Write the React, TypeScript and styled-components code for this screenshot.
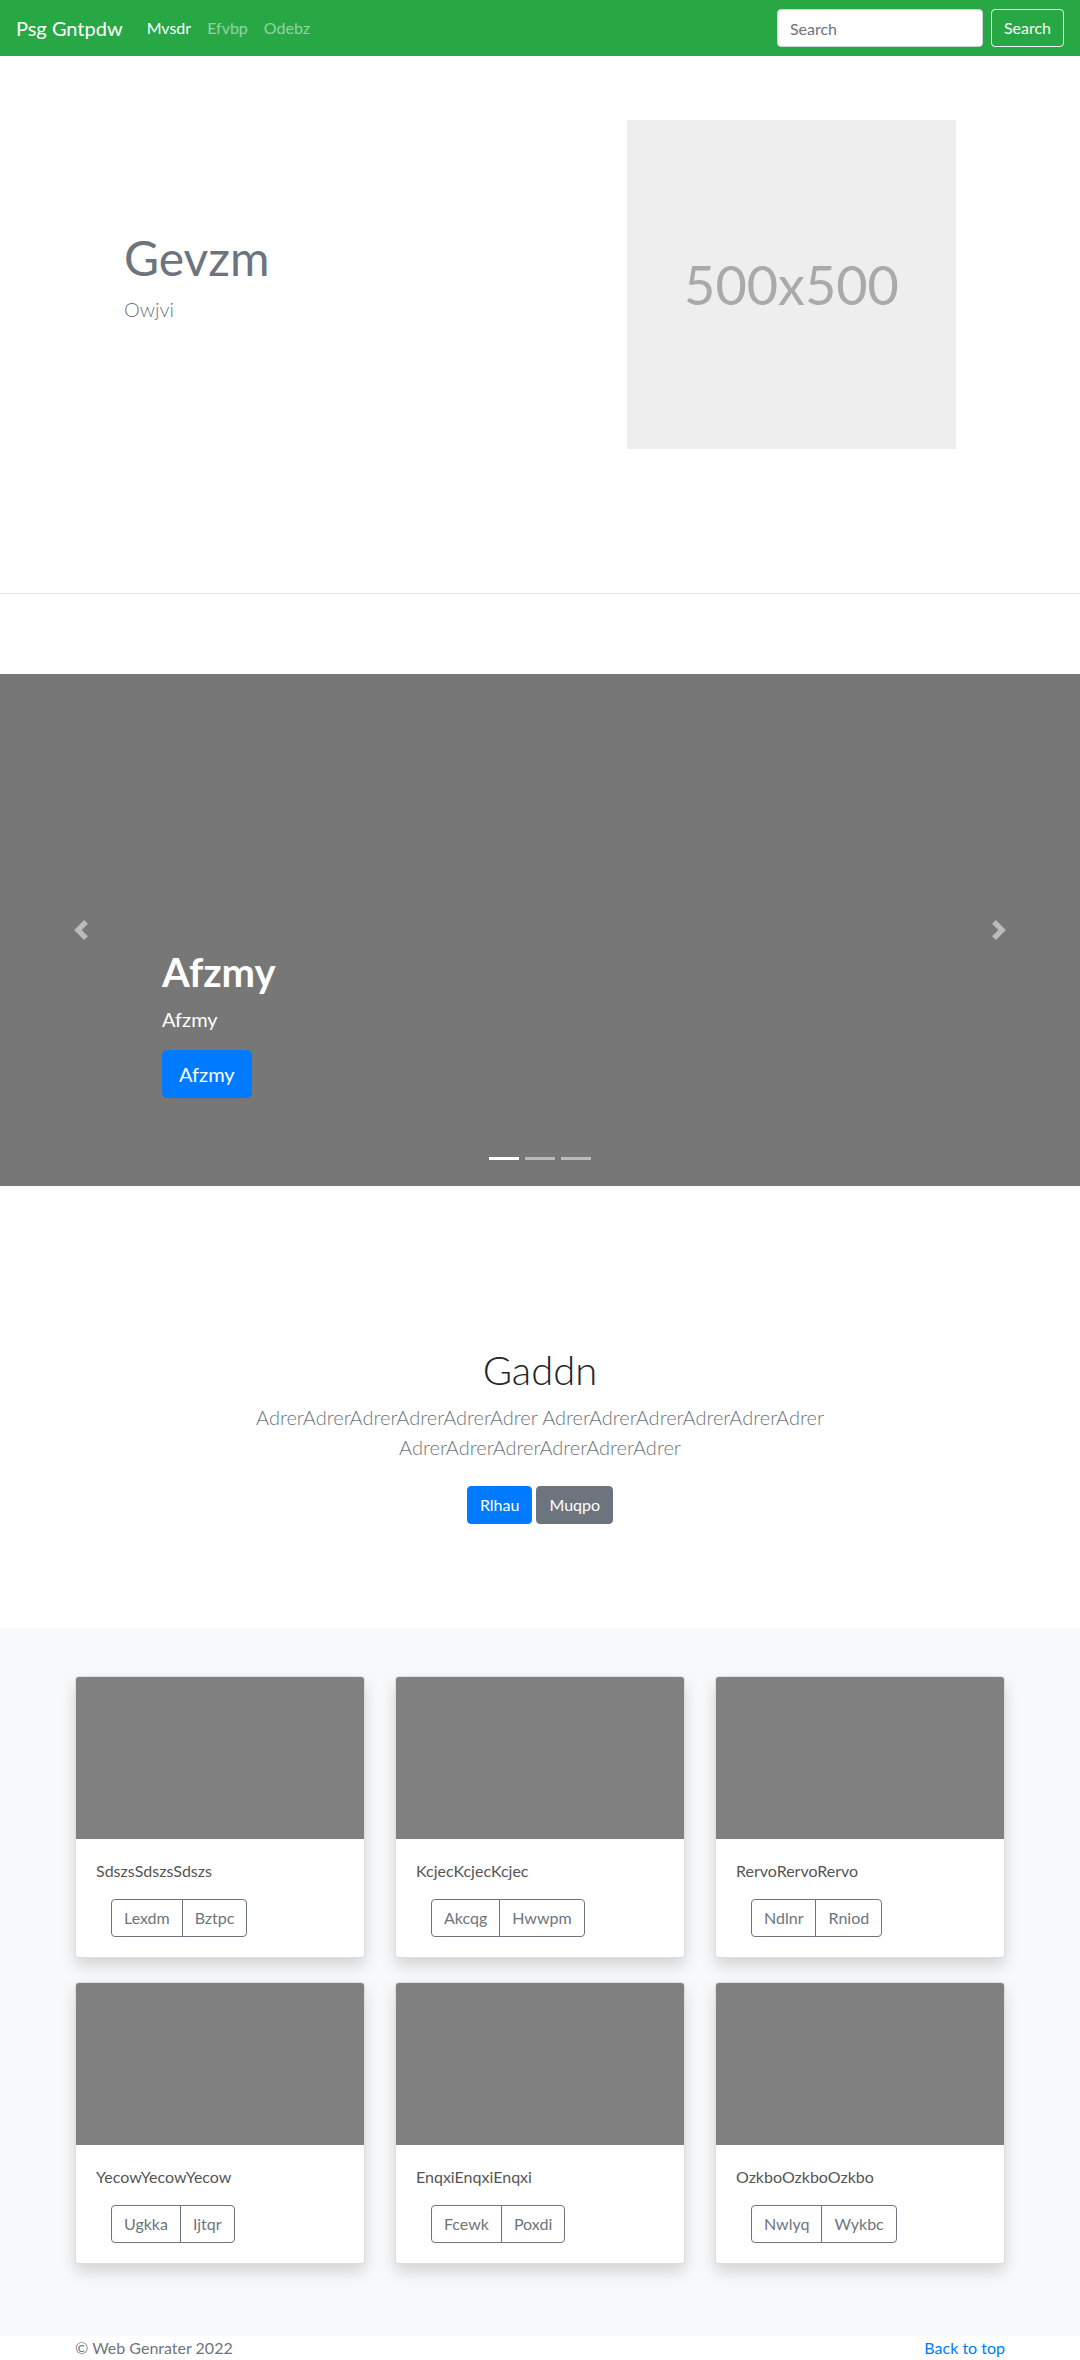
import React from "react";
import styled, { createGlobalStyle } from "styled-components";

const GlobalStyle = createGlobalStyle`
  html, body { margin: 0; padding: 0; }
  body {
    font-family: "Lato", "Segoe UI", Roboto, "Liberation Sans", sans-serif;
    font-size: 16px;
    line-height: 1.5;
    color: #212529;
    background: #fff;
  }
  * { box-sizing: border-box; }
`;

const Navbar = styled.nav`
  height: 56px;
  background: #28a745;
  display: flex;
  align-items: center;
  padding: 8px 16px;
`;

const Brand = styled.a`
  font-size: 20px;
  line-height: 30px;
  padding: 5px 0;
  margin-right: 16px;
  color: #fff;
  text-decoration: none;
`;

const NavList = styled.ul`
  display: flex;
  list-style: none;
  margin: 0;
  padding: 0;
`;

const NavLink = styled.a<{ $active?: boolean }>`
  display: block;
  padding: 8px;
  font-size: 16px;
  line-height: 24px;
  color: ${(p) => (p.$active ? "#fff" : "rgba(255,255,255,0.5)")};
  text-decoration: none;
`;

const SearchForm = styled.form`
  margin-left: auto;
  display: flex;
  align-items: center;
`;

const SearchInput = styled.input`
  width: 206px;
  height: 38px;
  padding: 6px 12px;
  font: inherit;
  font-size: 16px;
  color: #495057;
  background: #fff;
  border: 1px solid #ced4da;
  border-radius: 4px;
  margin-right: 8px;
  outline: none;
  &::placeholder { color: #6c757d; }
`;

const SearchButton = styled.button`
  height: 38px;
  padding: 6px 12px;
  font: inherit;
  font-size: 16px;
  line-height: 24px;
  color: #f8f9fa;
  background: transparent;
  border: 1px solid #f8f9fa;
  border-radius: 4px;
`;

const Container = styled.div<{ $max?: number }>`
  width: 100%;
  max-width: ${(p) => p.$max ?? 960}px;
  margin: 0 auto;
  padding: 0 15px;
`;

const Hero = styled.section`
  padding: 64px 0;
`;

const HeroGrid = styled.div`
  width: 960px;
  margin: 0 auto;
  display: grid;
  grid-template-columns: 1fr 1fr;
  align-items: center;
`;

const HeroText = styled.div`
  padding-left: 64px;
`;

const HeroTitle = styled.h1`
  margin: 0 0 8px;
  font-size: 48px;
  line-height: 1.2;
  font-weight: 400;
  color: #6c757d;
`;

const HeroLead = styled.p`
  margin: 0 0 16px;
  font-size: 20px;
  line-height: 30px;
  font-weight: 300;
  color: #6c757d;
`;

const HeroMedia = styled.div`
  display: flex;
  justify-content: flex-end;
  padding-right: 64px;
`;

const Placeholder = styled.div`
  width: 329px;
  height: 329px;
  background: #eee;
  color: #aaa;
  font-size: 54px;
  display: flex;
  align-items: center;
  justify-content: center;
`;

const Divider = styled.hr`
  margin: 80px 0;
  border: 0;
  border-top: 1px solid rgba(0, 0, 0, 0.1);
`;

const Carousel = styled.div`
  position: relative;
  height: 512px;
  background: #777;
  margin-bottom: 64px;
`;

const Control = styled.a<{ $side: "prev" | "next" }>`
  position: absolute;
  top: 0;
  bottom: 0;
  ${(p) => (p.$side === "prev" ? "left: 0;" : "right: 0;")}
  width: 15%;
  display: flex;
  align-items: center;
  justify-content: center;
  opacity: 0.5;
  svg { width: 20px; height: 20px; display: block; }
`;

const Caption = styled.div`
  position: absolute;
  left: 15%;
  right: 15%;
  bottom: 52px;
  padding: 20px 0;
  color: #fff;
  text-align: left;
`;

const CaptionTitle = styled.h1`
  margin: 0 0 8px;
  font-size: 40px;
  line-height: 1.2;
  font-weight: 700;
`;

const CaptionText = styled.p`
  margin: 0 0 16px;
  font-size: 20px;
  line-height: 30px;
`;

const ButtonRow = styled.p`
  margin: 0 0 16px;
`;

const Button = styled.a<{ $variant: "primary" | "secondary"; $large?: boolean }>`
  display: inline-block;
  color: #fff;
  text-decoration: none;
  background: ${(p) => (p.$variant === "primary" ? "#007bff" : "#6c757d")};
  border: 1px solid ${(p) => (p.$variant === "primary" ? "#007bff" : "#6c757d")};
  border-radius: ${(p) => (p.$large ? "5px" : "4px")};
  padding: ${(p) => (p.$large ? "8px 16px" : "6px 12px")};
  font-size: ${(p) => (p.$large ? "20px" : "16px")};
  line-height: 1.5;
`;

const Indicators = styled.ol`
  position: absolute;
  left: 0;
  right: 0;
  bottom: 0;
  margin: 0 0 16px;
  padding: 0;
  list-style: none;
  display: flex;
  justify-content: center;
`;

const Indicator = styled.li<{ $active?: boolean }>`
  width: 30px;
  height: 3px;
  margin: 0 3px;
  box-sizing: content-box;
  border-top: 10px solid transparent;
  border-bottom: 10px solid transparent;
  background: #fff;
  background-clip: padding-box;
  opacity: ${(p) => (p.$active ? 1 : 0.5)};
`;

const Jumbotron = styled.section`
  padding: 96px 0;
  text-align: center;
`;

const JumboTitle = styled.h1`
  margin: 0 0 8px;
  font-size: 40px;
  line-height: 1.2;
  font-weight: 300;
  color: #212529;
`;

const Lead = styled.p`
  margin: 0 0 16px;
  font-size: 20px;
  line-height: 30px;
  font-weight: 300;
  color: #6c757d;
`;

const JumboActions = styled.p`
  margin: 0;
  display: flex;
  justify-content: center;
  gap: 4px;
  a { margin: 8px 0; }
`;

const Album = styled.section`
  background: #f8f9fa;
  padding: 48px 0 72px;
`;

const CardGrid = styled.div`
  display: grid;
  grid-template-columns: repeat(3, 1fr);
  column-gap: 30px;
  row-gap: 24px;
`;

const Card = styled.div`
  background: #fff;
  border: 1px solid rgba(0, 0, 0, 0.125);
  border-radius: 4px;
  overflow: hidden;
  box-shadow: 0 8px 16px rgba(0, 0, 0, 0.15);
`;

const CardImage = styled.div`
  aspect-ratio: 16 / 9;
  background: #808080;
`;

const CardBody = styled.div`
  padding: 20px;
`;

const CardText = styled.p`
  margin: 0 0 16px;
  font-size: 16px;
  line-height: 24px;
  color: #555;
`;

const ButtonGroup = styled.div`
  display: inline-flex;
  margin-left: 15px;
`;

const GroupButton = styled.button`
  font: inherit;
  font-size: 16px;
  line-height: 24px;
  padding: 6px 12px;
  color: #6c757d;
  background: transparent;
  border: 1px solid #6c757d;
  &:first-child { border-radius: 4px 0 0 4px; }
  &:last-child { border-radius: 0 4px 4px 0; margin-left: -1px; }
`;

const Footer = styled.footer`
  padding-bottom: 48px;
  color: #6c757d;
`;

const FooterRow = styled.div`
  display: flex;
  justify-content: space-between;
  p { margin: 0 0 16px; }
  a { color: #007bff; text-decoration: none; }
`;

const cards = [
  { title: "SdszsSdszsSdszs", a: "Lexdm", b: "Bztpc" },
  { title: "KcjecKcjecKcjec", a: "Akcqg", b: "Hwwpm" },
  { title: "RervoRervoRervo", a: "Ndlnr", b: "Rniod" },
  { title: "YecowYecowYecow", a: "Ugkka", b: "Ijtqr" },
  { title: "EnqxiEnqxiEnqxi", a: "Fcewk", b: "Poxdi" },
  { title: "OzkboOzkboOzkbo", a: "Nwlyq", b: "Wykbc" },
];

export default function App() {
  return (
    <>
      <GlobalStyle />
      <Navbar>
        <Brand href="#">Psg Gntpdw</Brand>
        <NavList>
          <li><NavLink href="#" $active>Mvsdr</NavLink></li>
          <li><NavLink href="#">Efvbp</NavLink></li>
          <li><NavLink href="#">Odebz</NavLink></li>
        </NavList>
        <SearchForm onSubmit={(e) => e.preventDefault()}>
          <SearchInput type="search" placeholder="Search" />
          <SearchButton type="submit">Search</SearchButton>
        </SearchForm>
      </Navbar>

      <Hero>
        <HeroGrid>
          <HeroText>
            <HeroTitle>Gevzm</HeroTitle>
            <HeroLead>Owjvi</HeroLead>
          </HeroText>
          <HeroMedia>
            <Placeholder>500x500</Placeholder>
          </HeroMedia>
        </HeroGrid>
      </Hero>

      <Divider />

      <Carousel>
        <Control $side="prev" href="#">
          <svg viewBox="0 0 8 8" fill="#fff">
            <path d="M5.25 0l-4 4 4 4 1.5-1.5L4.25 4l2.5-2.5L5.25 0z" />
          </svg>
        </Control>
        <Control $side="next" href="#">
          <svg viewBox="0 0 8 8" fill="#fff">
            <path d="M2.75 0l-1.5 1.5L3.75 4l-2.5 2.5L2.75 8l4-4-4-4z" />
          </svg>
        </Control>
        <Caption>
          <CaptionTitle>Afzmy</CaptionTitle>
          <CaptionText>Afzmy</CaptionText>
          <ButtonRow>
            <Button href="#" $variant="primary" $large>Afzmy</Button>
          </ButtonRow>
        </Caption>
        <Indicators>
          <Indicator $active />
          <Indicator />
          <Indicator />
        </Indicators>
      </Carousel>

      <Jumbotron>
        <Container $max={640}>
          <JumboTitle>Gaddn</JumboTitle>
          <Lead>
            AdrerAdrerAdrerAdrerAdrerAdrer AdrerAdrerAdrerAdrerAdrerAdrer AdrerAdrerAdrerAdrerAdrerAdrer
          </Lead>
          <JumboActions>
            <Button href="#" $variant="primary">Rlhau</Button>
            <Button href="#" $variant="secondary">Muqpo</Button>
          </JumboActions>
        </Container>
      </Jumbotron>

      <Album>
        <Container>
          <CardGrid>
            {cards.map((c) => (
              <Card key={c.title}>
                <CardImage />
                <CardBody>
                  <CardText>{c.title}</CardText>
                  <ButtonGroup>
                    <GroupButton type="button">{c.a}</GroupButton>
                    <GroupButton type="button">{c.b}</GroupButton>
                  </ButtonGroup>
                </CardBody>
              </Card>
            ))}
          </CardGrid>
        </Container>
      </Album>

      <Footer>
        <Container>
          <FooterRow>
            <p>© Web Genrater 2022</p>
            <p><a href="#">Back to top</a></p>
          </FooterRow>
        </Container>
      </Footer>
    </>
  );
}
